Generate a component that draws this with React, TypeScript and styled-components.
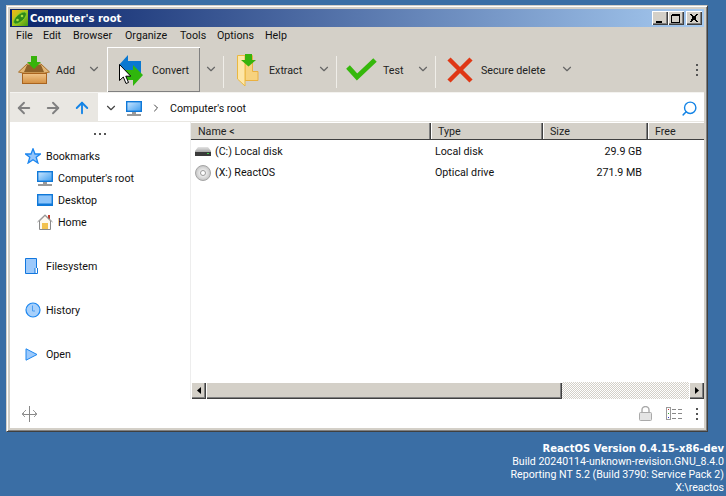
import React from 'react';
import styled, { createGlobalStyle } from 'styled-components';
import { ArrowLeft, ArrowRight, ArrowUp, ChevronDown, ChevronRight, Search } from 'lucide-react';

const GlobalStyle = createGlobalStyle`
  html, body {
    margin: 0;
    height: 100%;
    overflow: hidden;
    background: #3a6ea5;
    font-family: Roboto, 'Liberation Sans', sans-serif;
    font-size: 10.7px;
    color: #000;
  }
`;

const Desktop = styled.div`
  position: relative;
  width: 726px;
  height: 496px;
  background: #3a6ea5;
`;

const Window = styled.div`
  position: absolute;
  left: 6px;
  top: 5px;
  width: 702px;
  height: 427px;
  box-sizing: border-box;
  padding: 3px;
  display: flex;
  flex-direction: column;
  background: #d4d0c8;
  border: 1px solid;
  border-color: #d4d0c8 #404040 #404040 #d4d0c8;
  box-shadow: inset 1px 1px #fff, inset -1px -1px #808080;
`;

const TitleBar = styled.div`
  height: 18px;
  flex: none;
  display: flex;
  align-items: center;
  padding: 0 2px;
  background: linear-gradient(90deg, #0a246a, #a6caf0);
`;

const TitleText = styled.span`
  margin-left: 2px;
  font-family: 'DejaVu Sans', sans-serif;
  font-weight: 700;
  font-size: 10px;
  color: #fff;
  flex: 1;
`;

const CaptionButtons = styled.div`
  display: flex;
`;

const CaptionButton = styled.div<{ $last?: boolean }>`
  width: 16px;
  height: 14px;
  margin-left: ${p => (p.$last ? '2px' : '0')};
  display: flex;
  align-items: center;
  justify-content: center;
  background: #d4d0c8;
  box-shadow: inset 1px 1px #fff, inset -1px -1px #404040, inset -2px -2px #808080;
`;

const MenuBar = styled.div`
  height: 18px;
  flex: none;
  display: flex;
  align-items: center;
  padding: 0 0 1px 6px;
  box-sizing: border-box;
`;

const MenuItem = styled.span<{ $w: number }>`
  width: ${p => p.$w}px;
  color: #111;
`;

const Toolbar = styled.div`
  height: 47px;
  flex: none;
  display: flex;
  align-items: stretch;
  padding: 2px 0 0 4px;
  box-sizing: border-box;
`;

const ToolMain = styled.div<{ $w: number; $pad: number; $active?: boolean }>`
  width: ${p => p.$w}px;
  padding-left: ${p => p.$pad}px;
  box-sizing: border-box;
  display: flex;
  align-items: center;
  color: #222;
  ${p => p.$active && 'box-shadow: inset 1px 1px #fff, inset -1px -1px #808080;'}
`;

const ToolIcon = styled.div<{ $slot: number }>`
  width: ${p => p.$slot}px;
  flex: none;
  display: flex;
  align-items: center;
`;

const ToolLabel = styled.span`
  padding-top: 2px;
`;

const ToolChevron = styled.div<{ $after?: number }>`
  width: 23px;
  flex: none;
  margin-right: ${p => p.$after ?? 0}px;
  display: flex;
  align-items: center;
  justify-content: center;
  color: #666;
  padding: 0 2px 2px 0;
  box-sizing: border-box;
`;

const ToolSep = styled.div`
  width: 1px;
  flex: none;
  margin: 9px 0 4px;
  background: #f0eee9;
`;

const Kebab = styled.div<{ $right?: number }>`
  margin-left: auto;
  margin-right: ${p => p.$right ?? 6}px;
  align-self: center;
  width: 2px;
  height: 12px;
  background: repeating-linear-gradient(180deg, #555 0 2px, transparent 2px 5px);
`;

const AddressRow = styled.div`
  height: 30px;
  flex: none;
  display: flex;
  background: #e9e7e2;
  border-top: 1px solid #f4f3f0;
  box-sizing: border-box;
`;

const NavArrows = styled.div`
  width: 88px;
  flex: none;
  display: flex;
  align-items: center;
  padding-left: 5px;
  gap: 11px;
  box-sizing: border-box;
`;

const AddressBox = styled.div`
  flex: 1;
  display: flex;
  align-items: center;
  background: #fff;
  padding: 2px 0 0 6px;
  margin-bottom: 1px;
`;

const AddressIcon = styled.div`
  display: flex;
  margin: 0 8px;
`;

const Crumb = styled.span`
  margin-left: 8px;
  flex: 1;
  color: #111;
`;

const SearchGlass = styled(Search)`
  transform: scaleX(-1);
  margin-right: 6px;
`;

const Main = styled.div`
  flex: 1;
  min-height: 0;
  display: flex;
  background: #fff;
`;

const Sidebar = styled.div`
  width: 181px;
  flex: none;
  box-sizing: border-box;
  border-right: 1px solid #ededed;
  display: flex;
  flex-direction: column;
`;

const Dots = styled.div`
  height: 23px;
  flex: none;
  display: flex;
  align-items: center;
  justify-content: center;
  gap: 3px;

  i {
    width: 2px;
    height: 2px;
    background: #555;
  }
`;

const SideRow = styled.div<{ $child?: boolean; $gap?: boolean }>`
  height: 22px;
  flex: none;
  display: flex;
  align-items: center;
  padding-left: ${p => (p.$child ? 27 : 15)}px;
  margin-top: ${p => (p.$gap ? 22 : 0)}px;
  color: #111;
`;

const SideIcon = styled.div`
  width: 21px;
  flex: none;
  display: flex;
  align-items: center;
`;

const ListPane = styled.div`
  flex: 1;
  min-width: 0;
  display: flex;
  flex-direction: column;
`;

const ListHeader = styled.div`
  margin-top: 1px;
  height: 17px;
  flex: none;
  display: flex;
  background: #d4d0c8;
  border-bottom: 1px solid #404040;
  box-sizing: border-box;
`;

const HeaderCell = styled.div<{ $w?: number }>`
  width: ${p => (p.$w ? `${p.$w}px` : 'auto')};
  flex: ${p => (p.$w ? 'none' : '1')};
  box-sizing: border-box;
  padding: 1px 0 0 7px;
  line-height: 16px;
  color: #222;
  border-right: ${p => (p.$w ? '1px solid #404040' : 'none')};
  box-shadow: ${p => (p.$w ? 'inset -1px 0 #808080, 1px 0 #fff' : 'none')};
`;

const Rows = styled.div`
  flex: 1;
  padding-top: 1px;
`;

const Row = styled.div`
  height: 21px;
  display: flex;
  align-items: center;
  color: #111;
`;

const NameCell = styled.div`
  width: 240px;
  flex: none;
  display: flex;
  align-items: center;
  padding-left: 4px;
  box-sizing: border-box;
  gap: 4px;
`;

const TypeCell = styled.div`
  width: 112px;
  flex: none;
  padding-left: 4px;
  box-sizing: border-box;
`;

const SizeCell = styled.div`
  width: 99px;
  flex: none;
  text-align: right;
`;

const ScrollBar = styled.div`
  height: 17px;
  flex: none;
  display: flex;
`;

const ScrollButton = styled.div`
  width: 15px;
  flex: none;
  display: flex;
  align-items: center;
  justify-content: center;
  background: #d4d0c8;
  box-shadow: inset 1px 1px #fff, inset -1px -1px #404040, inset -2px -2px #808080;
`;

const ScrollThumb = styled.div`
  width: 356px;
  flex: none;
  background: #d4d0c8;
  box-shadow: inset 1px 1px #fff, inset -1px -1px #404040, inset -2px -2px #808080;
`;

const ScrollTrack = styled.div`
  flex: 1;
  background: repeating-conic-gradient(#d4d0c8 0 25%, #fff 0 50%) 0 0 / 2px 2px;
`;

const StatusBar = styled.div`
  height: 29px;
  flex: none;
  display: flex;
  align-items: center;
  background: #fff;
  padding-left: 12px;
`;

const StatusIcons = styled.div`
  margin-left: auto;
  display: flex;
  align-items: center;
  gap: 14px;
  padding-right: 6px;
`;

const Cursor = styled.svg`
  position: absolute;
  left: 119px;
  top: 64px;
`;

const BuildInfo = styled.div`
  position: absolute;
  right: 2px;
  top: 442px;
  text-align: right;
  color: #fff;
  line-height: 13px;
  font-size: 10.6px;
  white-space: nowrap;
`;

const BuildTitle = styled.div`
  font-family: 'DejaVu Sans', sans-serif;
  font-weight: 700;
  font-size: 10px;
`;

const AddIcon = () => (
  <svg width="32" height="30" viewBox="0 0 32 30">
    <defs>
      <linearGradient id="boxbody" x1="0" y1="0" x2="0" y2="1">
        <stop offset="0" stopColor="#f0c58a" />
        <stop offset="1" stopColor="#d48f40" />
      </linearGradient>
    </defs>
    <path d="M.5 17 9 9h14l8.500 8-5 1H5z" fill="#e3b777" stroke="#a9702a" />
    <path d="M9 10 6 17h20l-3-7z" fill="#8f6128" />
    <rect x="4.500" y="18.500" width="24" height="10" fill="url(#boxbody)" stroke="#a9641f" />
    <path d="M13 1h6v6h4l-7 7-7-7h4z" fill="#37b30b" />
  </svg>
);

const ConvertIcon = () => (
  <svg width="26" height="32" viewBox="0 0 26 32">
    <path d="M0 11 9 1v6h13v12H9v4z" fill="#0a78d1" />
    <path d="M24 21 14 11v5H6v10h8v6z" fill="#2fb60c" />
  </svg>
);

const ExtractIcon = () => (
  <svg width="23" height="34" viewBox="0 0 23 34">
    <path d="M8 2.500h7.500v16H21V27.500H8z" fill="#f7d27e" stroke="#eab040" />
    <path d="M.5 2.500H8V33L.5 26z" fill="#fde6a8" stroke="#eab840" />
    <path d="M8 1h7v6h4l-7.500 6.500L4 7h4z" fill="#37b30b" />
  </svg>
);

const CheckIcon = () => (
  <svg width="31" height="24" viewBox="0 0 31 24">
    <path d="M2 9l9 10L29 2" fill="none" stroke="#35b80c" strokeWidth="5" />
  </svg>
);

const CrossIcon = () => (
  <svg width="26" height="26" viewBox="0 0 26 26">
    <path d="M2 2l22 22M24 2 2 24" fill="none" stroke="#df3715" strokeWidth="4.500" />
  </svg>
);

const MonitorIcon = () => (
  <svg width="16" height="15" viewBox="0 0 16 15">
    <defs>
      <linearGradient id="scr" x1="0" y1="0" x2="1" y2="1">
        <stop offset="0" stopColor="#cfe8ff" />
        <stop offset="1" stopColor="#3d9df0" />
      </linearGradient>
    </defs>
    <rect x="0.700" y="0.700" width="14.600" height="9.600" fill="url(#scr)" stroke="#0f78d8" strokeWidth="1.400" />
    <rect x="6" y="11" width="4" height="2" fill="#9a9a9a" />
    <rect x="1" y="13" width="14" height="2" fill="#999" />
  </svg>
);

const DesktopIcon = () => (
  <svg width="16" height="12" viewBox="0 0 16 12">
    <rect x="0.700" y="0.700" width="14.600" height="10.600" fill="#8cc4fa" stroke="#0f78d8" strokeWidth="1.400" />
    <rect x="1" y="9.500" width="14" height="2" fill="#0f78d8" />
  </svg>
);

const HomeIcon = () => (
  <svg width="16" height="16" viewBox="0 0 16 16">
    <rect x="11" y="1" width="2" height="4" fill="#c0392b" />
    <path d="M2.500 15.500V7L8 1.500 13.500 7v8.500z" fill="#fdf8ef" stroke="#8a8a8a" />
    <path d="M0.500 8 8 .8 15.500 8" fill="none" stroke="#8a8a8a" />
    <rect x="5" y="9" width="6" height="6" fill="#f2c14e" />
  </svg>
);

const StarIcon = () => (
  <svg width="16" height="16" viewBox="0 0 16 16">
    <path d="M8 .8 10 6h5.500l-4.300 3.300 1.700 5.700L8 11.700 3.100 15l1.700-5.700L.5 6H6z" fill="#94c5fb" stroke="#1c86ef" strokeWidth="1.300" />
  </svg>
);

const FileIcon = () => (
  <svg width="13" height="16" viewBox="0 0 13 16">
    <path d="M.5.5h11v15H.5z" fill="#9cc9fb" stroke="#1277de" />
    <path d="M10 10v5.500h2.500V10" fill="#fff" stroke="#1277de" />
  </svg>
);

const ClockIcon = () => (
  <svg width="16" height="16" viewBox="0 0 16 16">
    <circle cx="8" cy="8" r="7" fill="#a7d0fb" stroke="#1c86ef" strokeWidth="1.200" />
    <path d="M7.500 3.500V9H10" fill="none" stroke="#4a9cf0" />
  </svg>
);

const PlayIcon = () => (
  <svg width="13" height="13" viewBox="0 0 13 13">
    <path d="M1 .8 12 6.500 1 12.200z" fill="#9cc9fb" stroke="#1c86ef" />
  </svg>
);

const DiskIcon = () => (
  <svg width="16" height="9" viewBox="0 0 16 9">
    <defs>
      <linearGradient id="disktop" x1="0" y1="0" x2="0" y2="1">
        <stop offset="0" stopColor="#e4e4e4" />
        <stop offset="1" stopColor="#a8a8a8" />
      </linearGradient>
    </defs>
    <path d="M3 0h10l3 4v1H0V4z" fill="url(#disktop)" />
    <rect x="0" y="5" width="16" height="4" fill="#3a3a3a" />
    <rect x="12" y="6" width="2" height="1" fill="#3fd24a" />
  </svg>
);

const DiscIcon = () => (
  <svg width="16" height="16" viewBox="0 0 16 16">
    <defs>
      <radialGradient id="disc">
        <stop offset="0.300" stopColor="#f2f2f2" />
        <stop offset="1" stopColor="#c4c4c4" />
      </radialGradient>
    </defs>
    <circle cx="8" cy="8" r="7.500" fill="url(#disc)" stroke="#a5a5a5" />
    <circle cx="8" cy="8" r="2.500" fill="#fff" stroke="#999" />
  </svg>
);

const LockIcon = () => (
  <svg width="13" height="15" viewBox="0 0 13 15">
    <path d="M3 7V4a3.500 3.500 0 0 1 7 0v3" fill="none" stroke="#aaa" strokeWidth="1.400" />
    <rect x="0.500" y="6.500" width="12" height="8" rx="1" fill="#e4e4e4" stroke="#aaa" />
  </svg>
);

const ViewIcon = () => (
  <svg width="16" height="13" viewBox="0 0 16 13" shapeRendering="crispEdges">
    <rect x="0.500" y="0.500" width="4" height="12" fill="#fff" stroke="#999" />
    <rect x="2" y="2" width="1" height="1" fill="#c33" />
    <rect x="2" y="6" width="1" height="1" fill="#3a3" />
    <rect x="2" y="10" width="1" height="1" fill="#33c" />
    <path d="M6 2h4M12 2h4M6 6.500h4M12 6.500h4M6 11h4M12 11h4" stroke="#888" />
  </svg>
);

const MoveIcon = () => (
  <svg width="15" height="16" viewBox="0 0 15 16" shapeRendering="crispEdges">
    <path d="M7.500 0v16M0 8h15" stroke="#888" fill="none" />
    <path d="M3.500 4.500 .5 8l3 3.500M11.500 4.500l3 3.500-3 3.500" stroke="#999" fill="none" />
  </svg>
);

const CaptionGlyph = ({ kind }: { kind: 'min' | 'max' | 'close' }) => (
  <svg width="10" height="9" viewBox="0 0 10 9" shapeRendering="crispEdges">
    {kind === 'min' && <rect x="1" y="7" width="6" height="2" fill="#000" />}
    {kind === 'max' && <path d="M.5 1.500h8v7h-8zM.5.500h8" fill="none" stroke="#000" />}
    {kind === 'close' && <path d="M1 0l7 8M2 0l7 8M8 0l-7 8M9 0l-7 8" stroke="#000" />}
  </svg>
);

const AppIcon = () => (
  <svg width="16" height="16" viewBox="0 0 16 16">
    <defs>
      <linearGradient id="appbg" x1="0" y1="0" x2="1" y2="1">
        <stop offset="0" stopColor="#f4b818" />
        <stop offset="0.500" stopColor="#a8c81c" />
        <stop offset="1" stopColor="#3f9a16" />
      </linearGradient>
    </defs>
    <rect width="16" height="16" fill="url(#appbg)" />
    <ellipse cx="8" cy="8" rx="8" ry="3.600" transform="rotate(-42 8 8)" fill="#2f8a18" stroke="#7fd030" strokeWidth="0.800" />
    <circle cx="5.500" cy="10" r="1.300" fill="#a8e040" />
    <circle cx="10" cy="6" r="1.300" fill="#a8e040" />
  </svg>
);

const tools = [
  { label: 'Add', icon: <AddIcon />, w: 69, pad: 4, slot: 38, sep: false, after: 1 },
  { label: 'Convert', icon: <ConvertIcon />, w: 93, pad: 12, slot: 33, active: true, sep: true },
  { label: 'Extract', icon: <ExtractIcon />, w: 89, pad: 13, slot: 32, sep: true },
  { label: 'Test', icon: <CheckIcon />, w: 75, pad: 9, slot: 37, sep: true },
  { label: 'Secure delete', icon: <CrossIcon />, w: 120, pad: 11, slot: 34, sep: false },
];

const menus: [string, number][] = [
  ['File', 27],
  ['Edit', 30],
  ['Browser', 52],
  ['Organize', 55],
  ['Tools', 37],
  ['Options', 48],
  ['Help', 40],
];

export default function App() {
  return (
    <Desktop>
      <GlobalStyle />
      <Window>
        <TitleBar>
          <AppIcon />
          <TitleText>Computer's root</TitleText>
          <CaptionButtons>
            <CaptionButton><CaptionGlyph kind="min" /></CaptionButton>
            <CaptionButton><CaptionGlyph kind="max" /></CaptionButton>
            <CaptionButton $last><CaptionGlyph kind="close" /></CaptionButton>
          </CaptionButtons>
        </TitleBar>

        <MenuBar>
          {menus.map(([m, w]) => (
            <MenuItem key={m} $w={w}>{m}</MenuItem>
          ))}
        </MenuBar>

        <Toolbar>
          {tools.map(t => (
            <React.Fragment key={t.label}>
              <ToolMain $w={t.w} $pad={t.pad} $active={t.active}>
                <ToolIcon $slot={t.slot}>{t.icon}</ToolIcon>
                <ToolLabel>{t.label}</ToolLabel>
              </ToolMain>
              <ToolChevron $after={t.after}><ChevronDown size={14} /></ToolChevron>
              {t.sep && <ToolSep />}
            </React.Fragment>
          ))}
          <Kebab />
        </Toolbar>

        <AddressRow>
          <NavArrows>
            <ArrowLeft size={18} color="#808080" strokeWidth={2.5} />
            <ArrowRight size={18} color="#808080" strokeWidth={2.5} />
            <ArrowUp size={18} color="#1484e6" strokeWidth={2.5} />
          </NavArrows>
          <AddressBox>
            <ChevronDown size={14} color="#444" />
            <AddressIcon><MonitorIcon /></AddressIcon>
            <ChevronRight size={12} color="#444" />
            <Crumb>Computer's root</Crumb>
            <SearchGlass size={17} color="#1484e6" />
          </AddressBox>
        </AddressRow>

        <Main>
          <Sidebar>
            <Dots><i /><i /><i /></Dots>
            <SideRow><SideIcon><StarIcon /></SideIcon>Bookmarks</SideRow>
            <SideRow $child><SideIcon><MonitorIcon /></SideIcon>Computer's root</SideRow>
            <SideRow $child><SideIcon><DesktopIcon /></SideIcon>Desktop</SideRow>
            <SideRow $child><SideIcon><HomeIcon /></SideIcon>Home</SideRow>
            <SideRow $gap><SideIcon><FileIcon /></SideIcon>Filesystem</SideRow>
            <SideRow $gap><SideIcon><ClockIcon /></SideIcon>History</SideRow>
            <SideRow $gap><SideIcon><PlayIcon /></SideIcon>Open</SideRow>
          </Sidebar>

          <ListPane>
            <ListHeader>
              <HeaderCell $w={240}>Name &lt;</HeaderCell>
              <HeaderCell $w={112}>Type</HeaderCell>
              <HeaderCell $w={105}>Size</HeaderCell>
              <HeaderCell>Free</HeaderCell>
            </ListHeader>
            <Rows>
              <Row>
                <NameCell><DiskIcon />(C:) Local disk</NameCell>
                <TypeCell>Local disk</TypeCell>
                <SizeCell>29.9 GB</SizeCell>
              </Row>
              <Row>
                <NameCell><DiscIcon />(X:) ReactOS</NameCell>
                <TypeCell>Optical drive</TypeCell>
                <SizeCell>271.9 MB</SizeCell>
              </Row>
            </Rows>
            <ScrollBar>
              <ScrollButton>
                <svg width="4" height="7" viewBox="0 0 4 7"><path d="M4 0v7L0 3.500z" fill="#000" /></svg>
              </ScrollButton>
              <ScrollThumb />
              <ScrollTrack />
              <ScrollButton>
                <svg width="4" height="7" viewBox="0 0 4 7"><path d="M0 0v7l4-3.500z" fill="#000" /></svg>
              </ScrollButton>
            </ScrollBar>
          </ListPane>
        </Main>

        <StatusBar>
          <MoveIcon />
          <StatusIcons>
            <LockIcon />
            <ViewIcon />
            <Kebab $right={0} />
          </StatusIcons>
        </StatusBar>
      </Window>

      <Cursor width="12" height="21" viewBox="0 0 12 21">
        <path d="M.5.500v16l3.800-3.500 2.700 6.500 2.500-1-2.700-6.300h5z" fill="#fff" stroke="#000" />
      </Cursor>

      <BuildInfo>
        <BuildTitle>ReactOS Version 0.4.15-x86-dev</BuildTitle>
        <div>Build 20240114-unknown-revision.GNU_8.4.0</div>
        <div>Reporting NT 5.2 (Build 3790: Service Pack 2)</div>
        <div>X:\reactos</div>
      </BuildInfo>
    </Desktop>
  );
}
